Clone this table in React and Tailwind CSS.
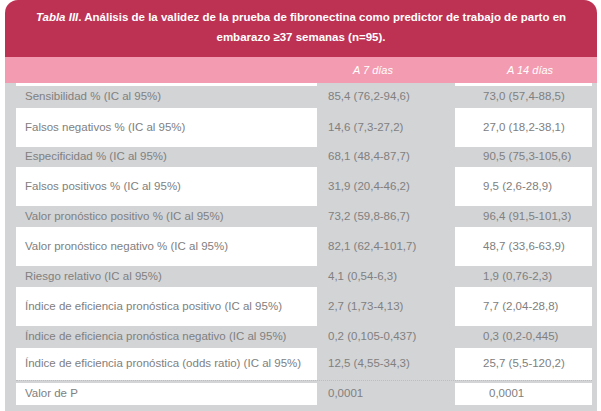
const rows = [
  { label: 'Sensibilidad % (IC al 95%)', a: '85,4 (76,2-94,6)', b: '73,0 (57,4-88,5)', white: false, h: 'h-[22px]' },
  { label: 'Falsos negativos % (IC al 95%)', a: '14,6 (7,3-27,2)', b: '27,0 (18,2-38,1)', white: true, h: 'h-[39px]' },
  { label: 'Especificidad % (IC al 95%)', a: '68,1 (48,4-87,7)', b: '90,5 (75,3-105,6)', white: false, h: 'h-[20px]' },
  { label: 'Falsos positivos % (IC al 95%)', a: '31,9 (20,4-46,2)', b: '9,5 (2,6-28,9)', white: true, h: 'h-[39px]' },
  { label: 'Valor pronóstico positivo % (IC al 95%)', a: '73,2 (59,8-86,7)', b: '96,4 (91,5-101,3)', white: false, h: 'h-[21px]' },
  { label: 'Valor pronóstico negativo % (IC al 95%)', a: '82,1 (62,4-101,7)', b: '48,7 (33,6-63,9)', white: true, h: 'h-[39px]' },
  { label: 'Riesgo relativo (IC al 95%)', a: '4,1 (0,54-6,3)', b: '1,9 (0,76-2,3)', white: false, h: 'h-[21px]' },
  { label: 'Índice de eficiencia pronóstica positivo (IC al 95%)', a: '2,7 (1,73-4,13)', b: '7,7 (2,04-28,8)', white: true, h: 'h-[39px]' },
  { label: 'Índice de eficiencia pronóstica negativo (IC al 95%)', a: '0,2 (0,105-0,437)', b: '0,3 (0,2-0,445)', white: false, h: 'h-[22px]' },
  { label: 'Índice de eficiencia pronóstica (odds ratio) (IC al 95%)', a: '12,5 (4,55-34,3)', b: '25,7 (5,5-120,2)', white: true, h: 'h-[32px]', sep: true },
  { label: 'Valor de P', a: '0,0001', b: '0,0001', white: true, h: 'h-[22px]', shift: true },
];

export default function App() {
  return (
    <div className="w-[601px] h-[411px] bg-white overflow-hidden font-['Liberation_Sans',Arial,sans-serif]">
      <div className="mx-[5px] w-[592px]">
        {/* title */}
        <div className="h-[57px] rounded-t-[13px] bg-[#bd3152] text-white font-bold text-[11.5px] leading-[20px] text-center pt-[7px]">
          <i>Tabla III</i>. Análisis de la validez de la prueba de fibronectina como predictor de trabajo de parto en
          <br />
          embarazo ≥37 semanas (n=95).
        </div>

        {/* column heads */}
        <div className="h-[26px] bg-[#f39bb1] grid grid-cols-[312px_138px_142px] items-center text-white italic text-[11px]">
          <div />
          <div className="pl-[36px]">A 7 días</div>
          <div className="pl-[52px]">A 14 días</div>
        </div>

        {/* body */}
        <div className="bg-[#d3d4d6] pl-[11px] pr-[5px] pb-[6px] text-[11.5px] text-[#808080]">
          <div className="grid grid-cols-[301px_138px_137px] h-[3px]">
            <div className="bg-white" />
            <div />
            <div className="bg-white" />
          </div>
          {rows.map((r, i) => (
            <div key={i}>
              <div className={`grid grid-cols-[301px_138px_137px] items-stretch ${r.h}`}>
                <div className={`flex items-center pl-[9px] whitespace-nowrap ${r.white ? 'bg-white' : ''}`}>{r.label}</div>
                <div className="flex items-center pl-[11px]">{r.a}</div>
                <div className={`flex items-center ${r.shift ? 'pl-[34px]' : 'pl-[28px]'} ${r.white ? 'bg-white' : ''}`}>{r.b}</div>
              </div>
              {r.sep && <div className="h-[3px] border-t border-dotted border-[#bdbdbf]" />}
            </div>
          ))}
        </div>
      </div>
    </div>
  );
}
